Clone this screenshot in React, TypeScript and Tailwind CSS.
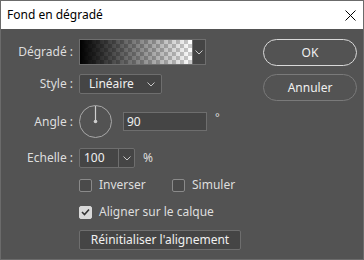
import React from "react";

const Chevron = ({ className = "" }: { className?: string }) => (
  <svg width="8" height="5" viewBox="0 0 8 5" className={className}>
    <path d="M0.5 0.5 L4 4 L7.5 0.5" fill="none" stroke="#c8c8c8" strokeWidth="1" />
  </svg>
);

const Checkbox = ({ checked, label }: { checked?: boolean; label: string }) => (
  <label className="flex items-center gap-[7px]">
    <span
      className={`flex h-[13px] w-[13px] items-center justify-center rounded-[2px] border ${
        checked ? "border-[#d9d9d9] bg-[#d9d9d9]" : "border-[#8a8a8a] bg-[#4a4a4a]"
      }`}
    >
      {checked && (
        <svg width="9" height="8" viewBox="0 0 9 8">
          <path d="M1 4 L3.5 6.5 L8 1.5" fill="none" stroke="#333" strokeWidth="1.6" />
        </svg>
      )}
    </span>
    <span>{label}</span>
  </label>
);

export default function App() {
  // checkerboard behind the gradient
  const checker = {
    backgroundImage:
      "linear-gradient(to right, rgba(0,0,0,1), rgba(0,0,0,0)), conic-gradient(#ffffff 25%, #cccccc 0 50%, #ffffff 0 75%, #cccccc 0)",
    backgroundSize: "100% 100%, 8px 8px",
  };

  return (
    <div
      className="flex h-[260px] w-[364px] flex-col border border-[#6b6b6b] bg-[#535353] text-[12px] text-[#dedede]"
      style={{ fontFamily: '"Noto Sans", "Open Sans", sans-serif' }}
    >
      {/* Title bar */}
      <div className="flex h-[28px] shrink-0 items-center justify-between bg-white pl-[6px] pr-[6px] text-[12px] text-black">
        <span>Fond en dégradé</span>
        <svg width="11" height="11" viewBox="0 0 11 11" className="mr-[1px]">
          <path d="M0.5 0.5 L10.5 10.5 M10.5 0.5 L0.5 10.5" stroke="#000" strokeWidth="1" />
        </svg>
      </div>

      <div className="flex flex-1 pt-[10px]">
        {/* Left form */}
        <div className="flex w-[255px] flex-col">
          <div className="flex h-[26px] items-center">
            <span className="w-[72px] text-right">Dégradé :</span>
            <div className="ml-[6px] flex h-[26px] w-[127px] border border-[#6e6e6e]">
              <div className="flex-1" style={checker} />
              <div className="flex w-[13px] items-center justify-center border-l border-[#6e6e6e] bg-[#454545]">
                <Chevron />
              </div>
            </div>
          </div>

          <div className="mt-[9px] flex h-[20px] items-center">
            <span className="w-[72px] text-right">Style :</span>
            <div className="ml-[6px] flex h-[20px] w-[83px] items-center justify-between rounded-[2px] border border-[#6e6e6e] bg-[#454545] pl-[9px] pr-[6px] text-[#f0f0f0]">
              <span>Linéaire</span>
              <Chevron />
            </div>
          </div>

          <div className="mt-[10px] flex h-[35px] items-center">
            <span className="w-[72px] text-right">Angle :</span>
            <svg width="33" height="35" viewBox="0 0 33 35" className="ml-[6px]">
              <circle cx="16.5" cy="17.5" r="16" fill="none" stroke="#a8a8a8" strokeWidth="1" />
              <line x1="16.5" y1="2" x2="16.5" y2="17.5" stroke="#cfcfcf" strokeWidth="1.2" />
              <circle cx="16.5" cy="17.5" r="1.8" fill="#cfcfcf" />
            </svg>
            <div className="ml-[11px] flex h-[19px] w-[84px] items-center border border-[#6e6e6e] bg-[#454545] pl-[3px] text-[#f0f0f0]">
              90
            </div>
            <span className="ml-[8px] -mt-[8px] text-[11px]">°</span>
          </div>

          <div className="mt-[9px] flex h-[20px] items-center">
            <span className="w-[72px] text-right">Echelle :</span>
            <div className="ml-[6px] flex h-[20px] w-[56px] rounded-[2px] border border-[#6e6e6e] bg-[#454545] text-[#f0f0f0]">
              <span className="flex flex-1 items-center pl-[4px]">100</span>
              <span className="flex w-[16px] items-center justify-center border-l border-[#6e6e6e]">
                <Chevron />
              </span>
            </div>
            <span className="ml-[8px]">%</span>
          </div>

          <div className="mt-[11px] flex h-[12px] items-center pl-[78px]">
            <div className="w-[93px]">
              <Checkbox label="Inverser" />
            </div>
            <Checkbox label="Simuler" />
          </div>

          <div className="mt-[15px] flex h-[12px] items-center pl-[78px]">
            <Checkbox checked label="Aligner sur le calque" />
          </div>

          <div className="mt-[12px] pl-[78px]">
            <button className="flex h-[20px] w-[162px] items-center justify-center rounded-[2px] border border-[#6e6e6e] bg-[#454545] text-[#f0f0f0]">
              Réinitialiser l'alignement
            </button>
          </div>
        </div>

        {/* Buttons */}
        <div className="ml-[7px] flex flex-col gap-[8px]">
          <button className="h-[27px] w-[94px] rounded-full border-[1.5px] border-[#d9d9d9] text-[#f0f0f0]">
            OK
          </button>
          <button className="h-[27px] w-[94px] rounded-full border border-[#7a7a7a] text-[#f0f0f0]">
            Annuler
          </button>
        </div>
      </div>
    </div>
  );
}
